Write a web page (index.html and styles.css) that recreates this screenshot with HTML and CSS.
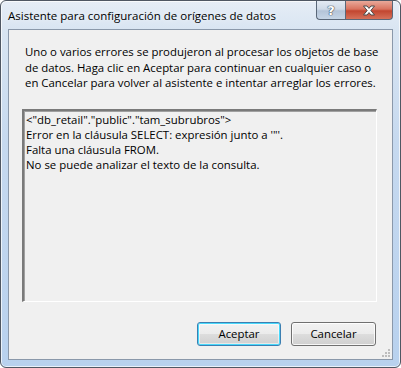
FILE: index.html
```html
<!DOCTYPE html>
<html>

<head>
    <title>Asistente para configuración de orígenes de datos</title>
    <link rel="stylesheet" href="styles.css">
</head>

<body>
    <div class="window">
        <div class="titlebar">
            <span class="title">Asistente para configuración de orígenes de datos</span>
            <div class="caption">
                <div class="cap-btn help">?</div>
                <div class="cap-btn close">
                    <svg width="14" height="11" viewBox="0 0 14 11">
                        <path d="M1.5 1 L5 1 L7 3.4 L9 1 L12.5 1 L8.8 5.5 L12.5 10 L9 10 L7 7.6 L5 10 L1.5 10 L5.2 5.5 Z"
                            fill="#fff" stroke="#4a4a4a" stroke-width="1" stroke-linejoin="round" />
                    </svg>
                </div>
            </div>
        </div>
        <div class="frame">
            <div class="client">
                <p class="message">Uno o varios errores se produjeron al procesar los objetos de base<br>de datos. Haga clic en Aceptar para continuar en cualquier caso o<br>en Cancelar para volver al asistente e intentar arreglar los errores.</p>

                <div class="errors">&lt;"db_retail"."public"."tam_subrubros"&gt;<br>Error en la cláusula SELECT: expresión junto a '"'.<br>Falta una cláusula FROM.<br>No se puede analizar el texto de la consulta.</div>

                <div class="buttons">
                    <button class="btn default">Aceptar</button>
                    <button class="btn">Cancelar</button>
                </div>

                <svg class="grip" width="10" height="10" viewBox="0 0 10 10">
                    <rect x="7" y="1" width="2" height="2" fill="#bdbdbd" />
                    <rect x="4" y="4" width="2" height="2" fill="#bdbdbd" />
                    <rect x="7" y="4" width="2" height="2" fill="#bdbdbd" />
                    <rect x="1" y="7" width="2" height="2" fill="#bdbdbd" />
                    <rect x="4" y="7" width="2" height="2" fill="#bdbdbd" />
                    <rect x="7" y="7" width="2" height="2" fill="#bdbdbd" />
                </svg>
            </div>
        </div>
    </div>
</body>

</html>
```

FILE: styles.css
```css
body {
    margin: 0px;
    background-color: white;
    font-family: 'Open Sans', 'Noto Sans', sans-serif;
    font-size: 11.4px;
    color: black;
}

.window {
    box-sizing: border-box;
    width: 401px;
    height: 368px;
    border: 1px solid #4f5763;
    border-radius: 6px;
    display: flex;
    flex-direction: column;
    background: linear-gradient(to bottom, #e6edf6 0px, #d9e5f2 28px, #c6d9ef 140px, #b8d1ee 100%);
    box-shadow: inset 0 0 0 1px rgba(255, 255, 255, 0.7);
    overflow: hidden;
}

.titlebar {
    height: 28px;
    display: flex;
    align-items: flex-start;
    padding-left: 7px;
    padding-right: 7px;
}

.title {
    margin-top: 7px;
    line-height: 15px;
    font-size: 11.5px;
    text-shadow: 0 0 6px rgba(255, 255, 255, 0.9);
}

.caption {
    margin-left: auto;
    display: flex;
}

.cap-btn {
    height: 18px;
    border: 1px solid #5a6778;
    border-top: none;
    display: flex;
    align-items: center;
    justify-content: center;
}

.help {
    width: 28px;
    border-right: none;
    border-bottom-left-radius: 4px;
    background: linear-gradient(to bottom, #e3eaf3 0%, #cfdae7 45%, #b4c4d8 55%, #c6d5e6 100%);
    color: white;
    font-weight: bold;
    font-size: 13px;
    font-family: 'DejaVu Sans', sans-serif;
    text-shadow: 0 0 1px #3b4656, 0 0 1px #3b4656, 0 0 1px #3b4656;
}

.close {
    width: 46px;
    border-bottom-right-radius: 4px;
    background: linear-gradient(to bottom, #e9a99a 0%, #d9735f 45%, #c24630 55%, #d6715a 100%);
}

.frame {
    flex: 1;
    display: flex;
    padding: 0px 7px 7px 7px;
}

.client {
    position: relative;
    flex: 1;
    display: flex;
    flex-direction: column;
    background-color: #f0f0f0;
    border: 1px solid #8a98aa;
}

.message {
    margin: 14px 0px 0px 16px;
    line-height: 15.5px;
    white-space: nowrap;
}

.errors {
    box-sizing: border-box;
    margin: 18px 0px 0px 13px;
    width: 355px;
    height: 193px;
    padding: 1px 2px;
    line-height: 15px;
    border-top: 2px solid #7a7a7a;
    border-left: 2px solid #7a7a7a;
    border-right: 1px solid #ffffff;
    border-bottom: 1px solid #ffffff;
    box-shadow: inset 1px 1px 0 #a0a0a0;
    white-space: nowrap;
}

.buttons {
    display: flex;
    justify-content: flex-end;
    gap: 10px;
    margin: 20px 16px 0px 0px;
}

.btn {
    width: 84px;
    height: 24px;
    font-family: 'Open Sans', 'Noto Sans', sans-serif;
    font-size: 11.4px;
    color: black;
    border: 1px solid #707070;
    border-radius: 3px;
    background: linear-gradient(to bottom, #f2f2f2 0%, #ebebeb 50%, #dddddd 50%, #cfcfcf 100%);
    box-shadow: inset 0 0 0 1px rgba(255, 255, 255, 0.8);
    padding: 0px;
}

.btn + .btn {
    width: 85px;
}

.btn.default {
    border-color: #3c7fb1;
    box-shadow: inset 0 0 0 1px #48d8fb, inset 0 0 0 2px rgba(255, 255, 255, 0.5);
}

.grip {
    position: absolute;
    right: 1px;
    bottom: 1px;
}
```
